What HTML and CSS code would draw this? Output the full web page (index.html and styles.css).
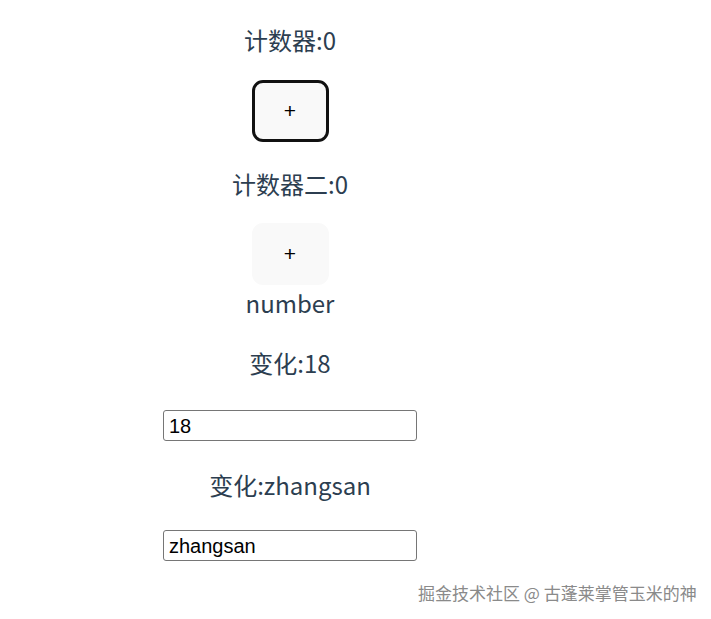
FILE: index.html
```html
<!DOCTYPE html>
<html lang="zh-CN">
<head>
    <meta charset="UTF-8">
    <meta name="viewport" content="width=device-width, initial-scale=1.0">
    <title>计数器</title>
    <link rel="stylesheet" href="styles.css">
</head>
<body>
    <div id="app">
        <p class="label first">计数器:0</p>
        <button class="add-btn focused">+</button>

        <p class="label">计数器二:0</p>
        <button class="add-btn second">+</button>
        <div class="type-name">number</div>

        <p class="label spaced">变化:18</p>
        <input class="text-input" type="text" value="18">

        <p class="label">变化:zhangsan</p>
        <input class="text-input" type="text" value="zhangsan">
    </div>

    <div class="watermark">掘金技术社区 @ 古蓬莱掌管玉米的神</div>
</body>
</html>
```

FILE: styles.css
```css
body {
    margin: 0;
    background-color: #ffffff;
}

#app {
    width: 580px;
    padding-top: 25px;
    text-align: center;
    color: #2c3e50;
    font-family: "Noto Sans CJK SC", "Noto Sans", sans-serif;
    font-size: 24px;
    line-height: 30px;
}

.label {
    margin: 27px 0 0;
    height: 30px;
}

.label.first {
    margin-top: 0;
}

.label.spaced {
    margin-top: 30px;
}

.add-btn {
    display: block;
    box-sizing: border-box;
    width: 77px;
    height: 62px;
    margin: 25px auto 0;
    padding: 0;
    background-color: #f9f9f9;
    border: 3px solid transparent;
    border-radius: 11px;
    color: #000000;
    font-family: "Liberation Sans", Arial, sans-serif;
    font-size: 21px;
    cursor: pointer;
}

.add-btn.focused {
    border-color: #111111;
}

.add-btn.second {
    margin-top: 24px;
}

.type-name {
    margin-top: 3px;
    height: 30px;
}

.text-input {
    display: block;
    box-sizing: border-box;
    width: 254px;
    height: 31px;
    margin: 32px auto 0;
    padding: 1px 5px 0;
    border: 1px solid #767676;
    border-radius: 3px;
    color: #000000;
    font-family: "Liberation Sans", Arial, sans-serif;
    font-size: 20px;
}

.text-input + .label {
    margin-top: 29px;
}

.label + .text-input {
    margin-top: 30px;
}

.spaced + .text-input {
    margin-top: 32px;
}

/* watermark from the screenshot source */
.watermark {
    position: absolute;
    left: 418px;
    top: 582px;
    color: #8a8a8a;
    font-family: "Noto Sans CJK SC", sans-serif;
    font-size: 17px;
    line-height: 22px;
    text-shadow: 0 1px 1px rgba(255, 255, 255, 0.8);
}
```
